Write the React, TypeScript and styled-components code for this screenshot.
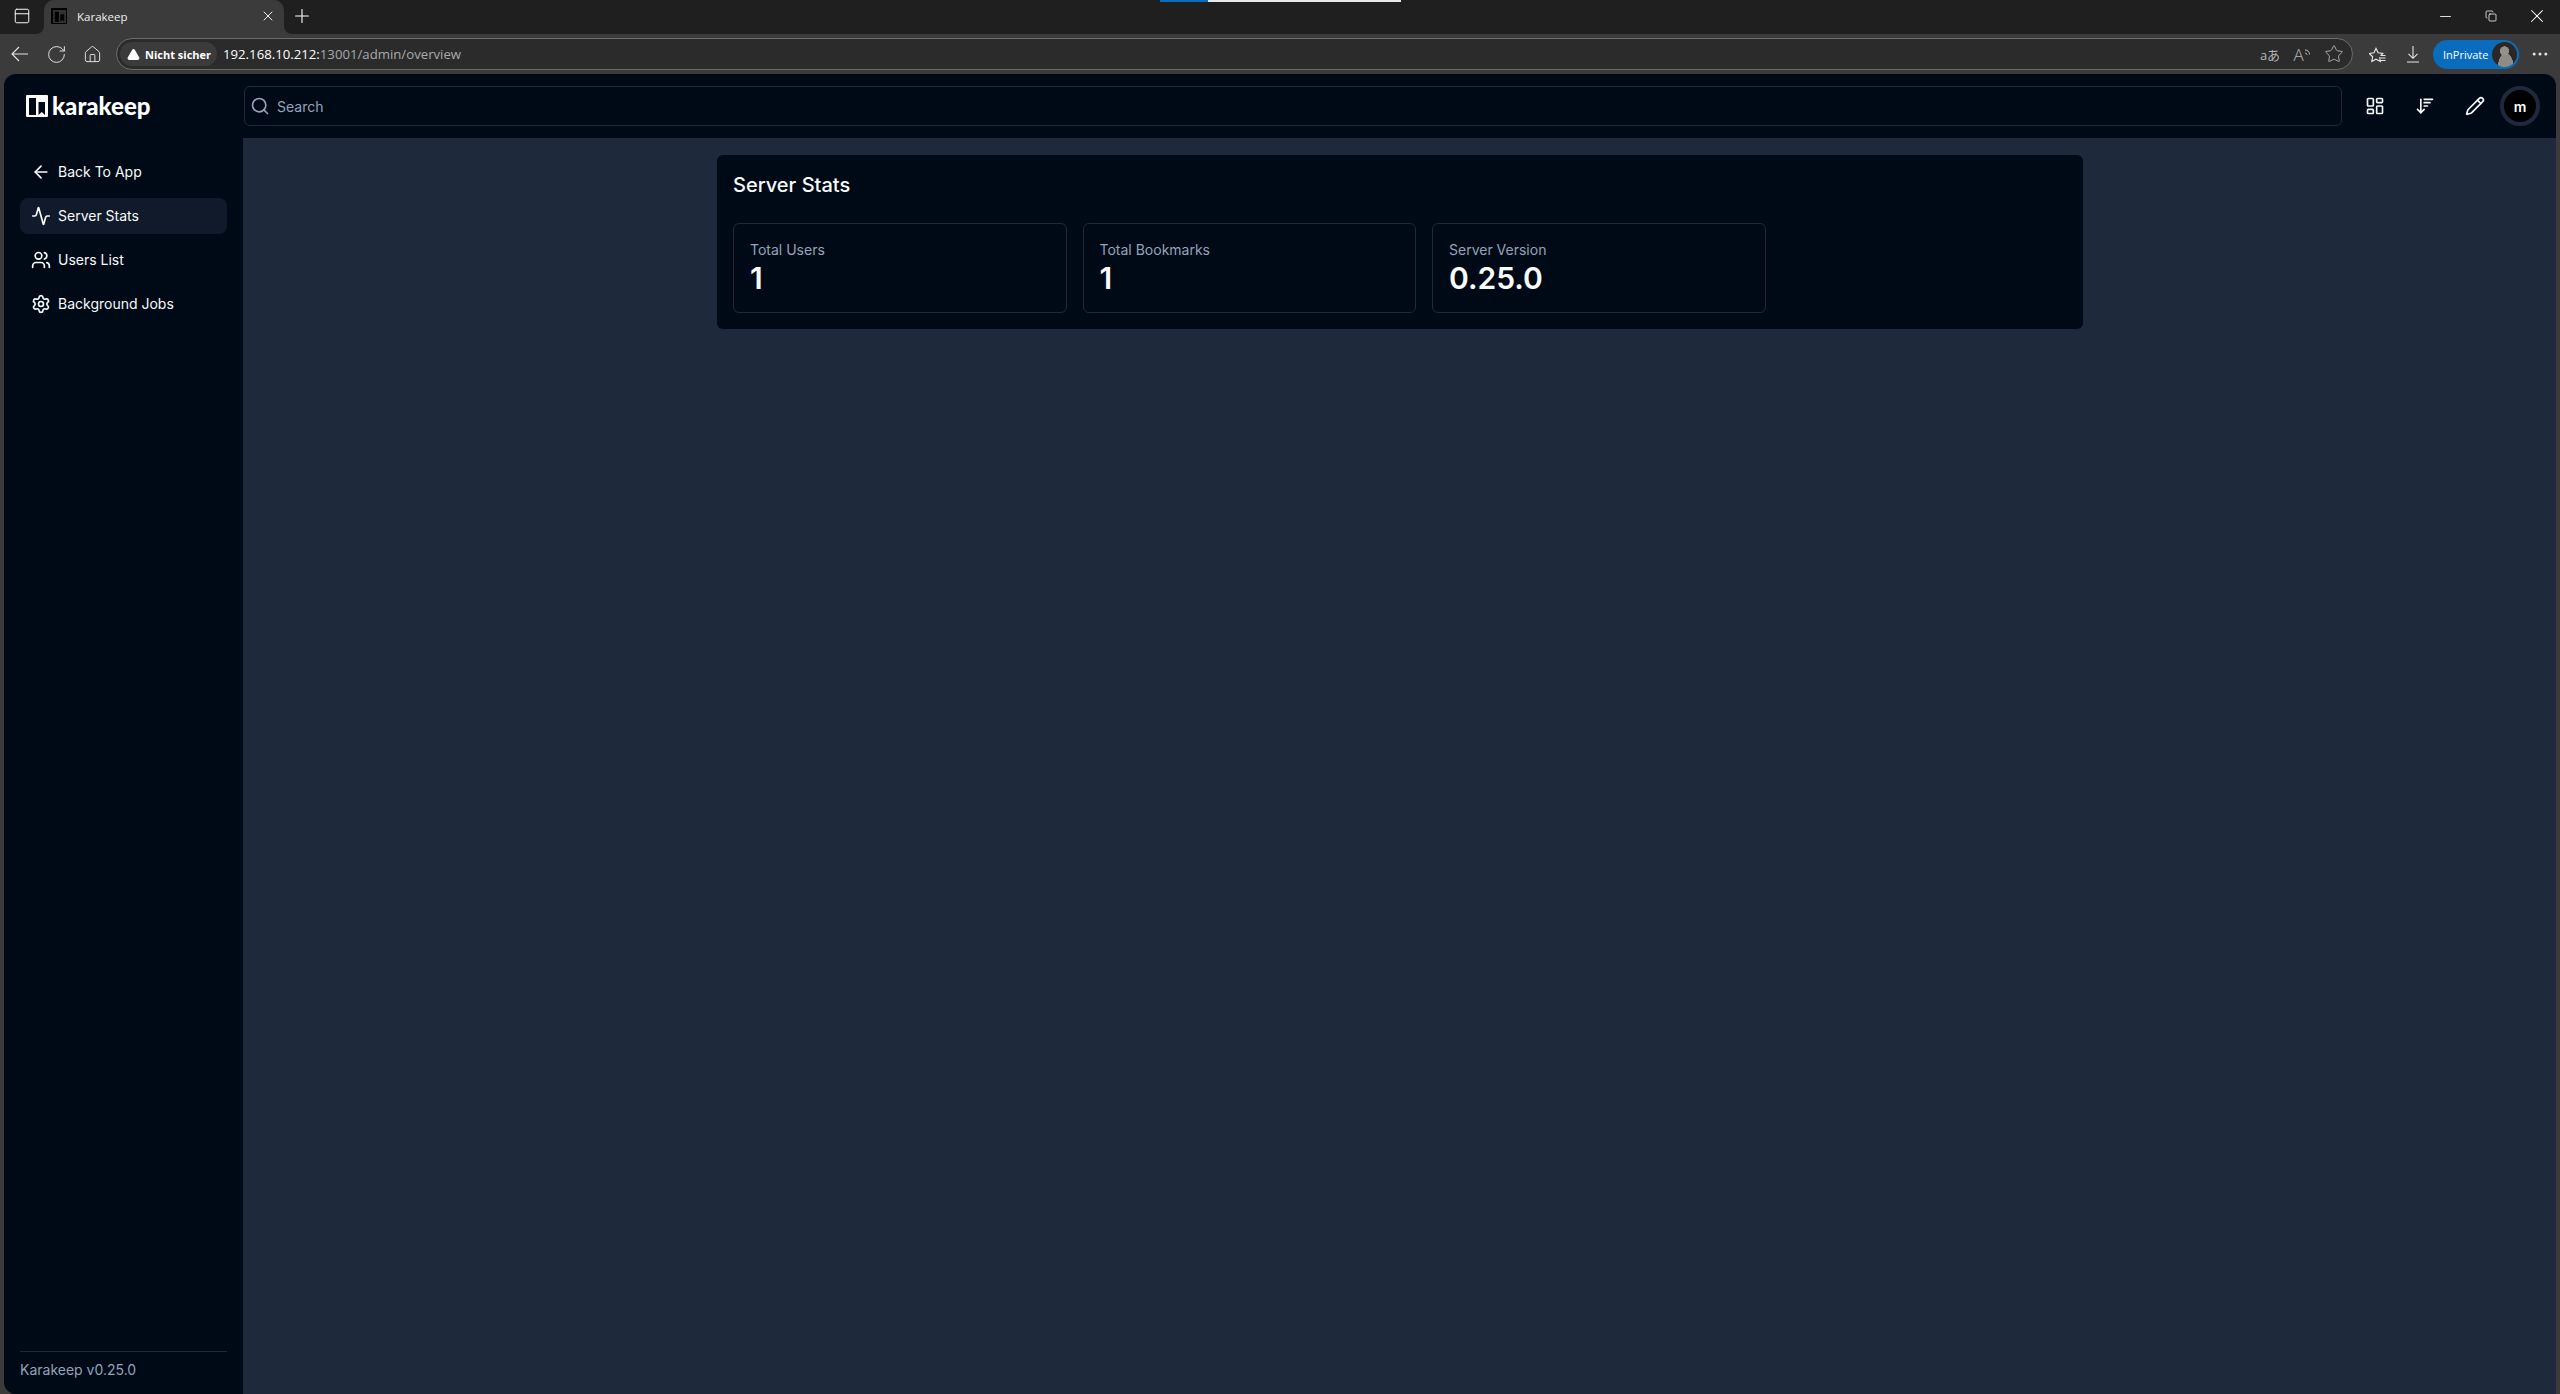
import React from 'react';
import styled, { createGlobalStyle } from 'styled-components';
import {
  Activity,
  ArrowDownWideNarrow,
  ArrowLeft,
  Copy,
  Ellipsis,
  House,
  LayoutDashboard,
  Minus,
  PanelTop,
  Pencil,
  Plus,
  RotateCw,
  Search,
  Settings,
  Star,
  TriangleAlert,
  Users,
  X,
} from 'lucide-react';

const ink = '#000a17';
const line = '#1e293b';

const GlobalStyle = createGlobalStyle`
  html, body {
    margin: 0;
    padding: 0;
    height: 100%;
    background: #3b3b3b;
    overflow: hidden;
  }
  * {
    box-sizing: border-box;
  }
`;

const Window = styled.div`
  width: 2560px;
  height: 1394px;
  display: flex;
  flex-direction: column;
  overflow: hidden;
  position: relative;
  background: #3b3b3b;
  font-family: Inter, 'Liberation Sans', sans-serif;
`;

/* browser chrome */
const TabStrip = styled.div`
  height: 34px;
  flex: none;
  display: flex;
  align-items: stretch;
  background: linear-gradient(#1f1f1f 50%, #3b3b3b 50%);
  color: #fff;
`;
const LoadStrip = styled.div`
  position: absolute;
  left: 1160px;
  top: 0;
  width: 241px;
  height: 2px;
  background: linear-gradient(to right, #0a6cbd 20%, #e8e8e8 20%);
`;
const TabToggle = styled.div`
  width: 44px;
  padding-bottom: 2px;
  display: flex;
  align-items: center;
  justify-content: center;
  background: #1f1f1f;
  border-bottom-right-radius: 8px;
`;
const Tab = styled.div`
  width: 240px;
  display: flex;
  align-items: center;
  padding: 0 8px 2px 7px;
  background: #3b3b3b;
  border-radius: 10px 10px 0 0;
  font: 11.5px 'Open Sans', sans-serif;
  color: #f0f0f0;
`;
const Favicon = styled.div`
  width: 16px;
  height: 16px;
  flex: none;
  background: #000;
  display: flex;
  align-items: center;
  justify-content: center;
  margin-right: 10px;
`;
const TabTitle = styled.span`
  flex: 1;
`;
const StripRest = styled.div`
  flex: 1;
  display: flex;
  align-items: center;
  padding-bottom: 2px;
  background: #1f1f1f;
  border-bottom-left-radius: 8px;
`;
const NewTab = styled.div`
  width: 36px;
  display: flex;
  align-items: center;
  justify-content: center;
`;
const WindowControls = styled.div`
  margin-left: auto;
  display: flex;
  align-items: center;
`;
const WindowButton = styled.div`
  width: 46px;
  display: flex;
  align-items: center;
  justify-content: center;
`;
const Toolbar = styled.div`
  height: 40px;
  flex: none;
  display: flex;
  align-items: center;
  color: #e6e6e6;
  padding-left: 2px;
`;
const NavButtons = styled.div`
  width: 114px;
  display: flex;
  align-items: center;
`;
const ToolSlot = styled.div`
  width: 36px;
  flex: none;
  display: flex;
  align-items: center;
  justify-content: center;
`;
const AddressBar = styled.div`
  width: 2237px;
  height: 32px;
  display: flex;
  align-items: center;
  background: #2b2b2b;
  border: 1px solid #6b6b6b;
  border-radius: 16px;
  padding: 0 8px 0 3px;
`;
const SecurityPill = styled.div`
  height: 24px;
  width: 97px;
  flex: none;
  display: flex;
  align-items: center;
  gap: 5px;
  padding-left: 7px;
  background: #3b3b3b;
  border-radius: 12px;
  font: 700 11px 'Open Sans', sans-serif;
  color: #fff;
`;
const Url = styled.div`
  margin-left: 6px;
  font: 13.2px 'Open Sans', sans-serif;
  color: #a9a9a9;
`;
const UrlHost = styled.span`
  color: #fff;
`;
const AddressActions = styled.div`
  margin-left: auto;
  display: flex;
  align-items: center;
  gap: 12px;
  color: #b4b4b4;
`;
const ActionSlot = styled.div`
  width: 20px;
  display: flex;
  align-items: center;
  justify-content: center;
  font: 13px 'Open Sans', 'Noto Sans CJK JP', sans-serif;
  white-space: nowrap;
`;
const ReadAloudLetter = styled.span`
  font: 300 17px 'Open Sans', sans-serif;
`;
const ToolbarRight = styled.div`
  flex: 1;
  display: flex;
  align-items: center;
  margin-left: 6px;
`;
const PrivatePill = styled.div`
  width: 86px;
  height: 29px;
  margin-left: 2px;
  flex: none;
  display: flex;
  align-items: center;
  justify-content: space-between;
  padding: 0 2px 0 10px;
  background: #0a6cbd;
  border-radius: 15px;
  font: 11px 'Open Sans', sans-serif;
  color: #fff;
`;
const ProfilePhoto = styled.div`
  width: 25px;
  height: 25px;
  border-radius: 50%;
  background: radial-gradient(circle at 50% 36%, #94908a 0 22%, transparent 24%),
    radial-gradient(ellipse at 55% 105%, #8f8b85 0 40%, transparent 42%), #2a2826;
`;
const MenuSlot = styled.div`
  flex: 1;
  display: flex;
  justify-content: center;
`;

/* app */
const AppFrame = styled.div`
  flex: 1;
  min-height: 0;
  margin: 0 4px;
  display: flex;
  background: ${line};
  border-radius: 12px 12px 0 12px;
  overflow: hidden;
`;
const Sidebar = styled.aside`
  width: 239px;
  flex: none;
  display: flex;
  flex-direction: column;
  background: ${ink};
  padding: 0 16px;
`;
const LogoRow = styled.div`
  height: 64px;
  display: flex;
  align-items: center;
  gap: 4px;
  padding: 0 0 0 6px;
  margin-bottom: 16px;
`;
const LogoText = styled.span`
  font: 900 24px/1 Lato, sans-serif;
  color: #fff;
`;
const NavList = styled.nav`
  display: flex;
  flex-direction: column;
  gap: 8px;
`;
const NavItem = styled.a<{ $active?: boolean }>`
  height: 36px;
  display: flex;
  align-items: center;
  gap: 7px;
  padding: 0 11px;
  border-radius: 8px;
  font-size: 14px;
  color: #f8fafc;
  background: ${({ $active }) => ($active ? '#101a2b' : 'transparent')};
`;
const NavLabel = styled.span`
  padding-bottom: 1px;
`;
const SidebarFooter = styled.div`
  margin-top: auto;
  height: 43px;
  padding-top: 8px;
  border-top: 1px solid ${line};
  font-size: 14px;
  line-height: 20px;
  color: #94a3b8;
`;
const Content = styled.div`
  flex: 1;
  min-width: 0;
  display: flex;
  flex-direction: column;
`;
const Header = styled.header`
  height: 64px;
  flex: none;
  display: flex;
  align-items: center;
  background: ${ink};
  padding: 0 1px;
  color: #f8fafc;
`;
const SearchBox = styled.div`
  width: 2098px;
  height: 40px;
  display: flex;
  align-items: center;
  gap: 7px;
  padding: 0 12px 0 5px;
  border: 1px solid ${line};
  border-radius: 6px;
  font-size: 14px;
  color: #94a3b8;
`;
const HeaderActions = styled.div`
  margin-left: 13px;
  flex: 1;
  display: flex;
  align-items: center;
  gap: 10px;
`;
const IconButton = styled.div`
  width: 40px;
  height: 40px;
  display: flex;
  align-items: center;
  justify-content: center;
`;
const Avatar = styled.div`
  width: 40px;
  height: 40px;
  margin-left: -5px;
  border-radius: 50%;
  display: flex;
  align-items: center;
  justify-content: center;
  background: #000;
  border: 4px solid ${line};
  font-size: 14px;
  font-weight: 600;
  color: #fff;
`;
const Main = styled.main`
  flex: 1;
  padding: 17px 0 17px 1px;
`;
const Card = styled.section`
  width: 1366px;
  margin: 0 auto;
  padding: 16px;
  background: ${ink};
  border-radius: 6px;
`;
const CardTitle = styled.h2`
  margin: 0 0 24px;
  font-size: 20px;
  line-height: 28px;
  font-weight: 500;
  color: #f8fafc;
`;
const StatRow = styled.div`
  display: flex;
  gap: 16px;
`;
const StatCard = styled.div`
  width: 25%;
  padding: 16px;
  border: 1px solid ${line};
  border-radius: 6px;
`;
const StatLabel = styled.div`
  font-size: 14px;
  line-height: 20px;
  color: #94a3b8;
`;
const StatValue = styled.div`
  font-size: 30px;
  line-height: 36px;
  font-weight: 600;
  color: #f8fafc;
`;

const KarakeepMark: React.FC<{ size: number; color: string; hole: string }> = ({ size, color, hole }) => (
  <svg width={size} height={size} viewBox="0 0 22 22">
    <rect x="0" y="0" width="22" height="22" fill={color} rx="1" />
    <rect x="3" y="3" width="7" height="17" fill={hole} />
    <path d="M12.5 7h6.5v13l-3.2-3-3.3 3z" fill={hole} />
  </svg>
);

const BackArrow = () => (
  <svg width="18" height="16" viewBox="0 0 18 16" fill="none" stroke="currentColor" strokeWidth="1.1">
    <path d="M17 8H1M8 1L1 8l7 7" />
  </svg>
);

const ReadAloudWaves = () => (
  <svg width="7" height="12" viewBox="0 0 7 12" fill="none" stroke="currentColor" strokeWidth="1">
    <path d="M1 5c1.2 0 2 .8 2 2M1 2c2.8 0 4.5 1.8 4.5 4.5" />
  </svg>
);

const FavoritesIcon = () => (
  <svg width="17" height="17" viewBox="0 0 17 17" fill="none" stroke="currentColor" strokeWidth="1.1">
    <path d="M10.6 11.2l.8 4.3-4.4-2.3-4.2 2.3.8-4.7L.4 7.5l4.6-.7L7 2.4l2.1 4.4 4.7.7-2 2" />
    <path d="M11.5 9.5h5M11.5 12h5M11.5 14.5h5" />
  </svg>
);

const DownloadIcon = () => (
  <svg width="14" height="18" viewBox="0 0 14 18" fill="none" stroke="currentColor" strokeWidth="1.1">
    <path d="M7 1v12M2.5 8.8L7 13.3l4.5-4.5M1 17h12" />
  </svg>
);

const stats = [
  { key: 'users', label: 'Total Users', value: '1' },
  { key: 'bookmarks', label: 'Total Bookmarks', value: '1' },
  { key: 'version', label: 'Server Version', value: '0.25.0' },
];

export default function App() {
  return (
    <Window>
      <GlobalStyle />
      <LoadStrip />
      <TabStrip>
        <TabToggle>
          <PanelTop size={18} strokeWidth={1.3} />
        </TabToggle>
        <Tab>
          <Favicon>
            <KarakeepMark size={13} color="#333" hole="#000" />
          </Favicon>
          <TabTitle>Karakeep</TabTitle>
          <X size={16} strokeWidth={1.5} />
        </Tab>
        <StripRest>
          <NewTab>
            <Plus size={22} strokeWidth={1.2} />
          </NewTab>
          <WindowControls>
            <WindowButton>
              <Minus size={17} strokeWidth={1.2} />
            </WindowButton>
            <WindowButton>
              <Copy size={12} strokeWidth={1.5} />
            </WindowButton>
            <WindowButton>
              <X size={22} strokeWidth={1.1} />
            </WindowButton>
          </WindowControls>
        </StripRest>
      </TabStrip>
      <Toolbar>
        <NavButtons>
          <ToolSlot>
            <BackArrow />
          </ToolSlot>
          <ToolSlot>
            <RotateCw size={21} strokeWidth={1.1} />
          </ToolSlot>
          <ToolSlot>
            <House size={19} strokeWidth={1.2} />
          </ToolSlot>
        </NavButtons>
        <AddressBar>
          <SecurityPill>
            <TriangleAlert size={13} fill="#fff" stroke="#fff" />
            Nicht sicher
          </SecurityPill>
          <Url>
            <UrlHost>192.168.10.212:</UrlHost>13001/admin/overview
          </Url>
          <AddressActions>
            <ActionSlot>aあ</ActionSlot>
            <ActionSlot>
              <ReadAloudLetter>A</ReadAloudLetter>
              <ReadAloudWaves />
            </ActionSlot>
            <ActionSlot>
              <Star size={20} strokeWidth={1.1} />
            </ActionSlot>
          </AddressActions>
        </AddressBar>
        <ToolbarRight>
          <ToolSlot>
            <FavoritesIcon />
          </ToolSlot>
          <ToolSlot>
            <DownloadIcon />
          </ToolSlot>
          <PrivatePill>
            InPrivate
            <ProfilePhoto />
          </PrivatePill>
          <MenuSlot>
            <Ellipsis size={20} strokeWidth={1.6} />
          </MenuSlot>
        </ToolbarRight>
      </Toolbar>
      <AppFrame>
        <Sidebar>
          <LogoRow>
            <KarakeepMark size={22} color="#fff" hole={ink} />
            <LogoText>karakeep</LogoText>
          </LogoRow>
          <NavList>
            <NavItem>
              <ArrowLeft size={20} />
              <NavLabel>Back To App</NavLabel>
            </NavItem>
            <NavItem $active>
              <Activity size={20} />
              <NavLabel>Server Stats</NavLabel>
            </NavItem>
            <NavItem>
              <Users size={20} />
              <NavLabel>Users List</NavLabel>
            </NavItem>
            <NavItem>
              <Settings size={20} />
              <NavLabel>Background Jobs</NavLabel>
            </NavItem>
          </NavList>
          <SidebarFooter>Karakeep v0.25.0</SidebarFooter>
        </Sidebar>
        <Content>
          <Header>
            <SearchBox>
              <Search size={20} />
              Search
            </SearchBox>
            <HeaderActions>
              <IconButton>
                <LayoutDashboard size={20} />
              </IconButton>
              <IconButton>
                <ArrowDownWideNarrow size={20} />
              </IconButton>
              <IconButton>
                <Pencil size={20} />
              </IconButton>
              <Avatar>m</Avatar>
            </HeaderActions>
          </Header>
          <Main>
            <Card>
              <CardTitle>Server Stats</CardTitle>
              <StatRow>
                {stats.map(({ key, label, value }) => (
                  <StatCard key={key}>
                    <StatLabel>{label}</StatLabel>
                    <StatValue>{value}</StatValue>
                  </StatCard>
                ))}
              </StatRow>
            </Card>
          </Main>
        </Content>
      </AppFrame>
    </Window>
  );
}
